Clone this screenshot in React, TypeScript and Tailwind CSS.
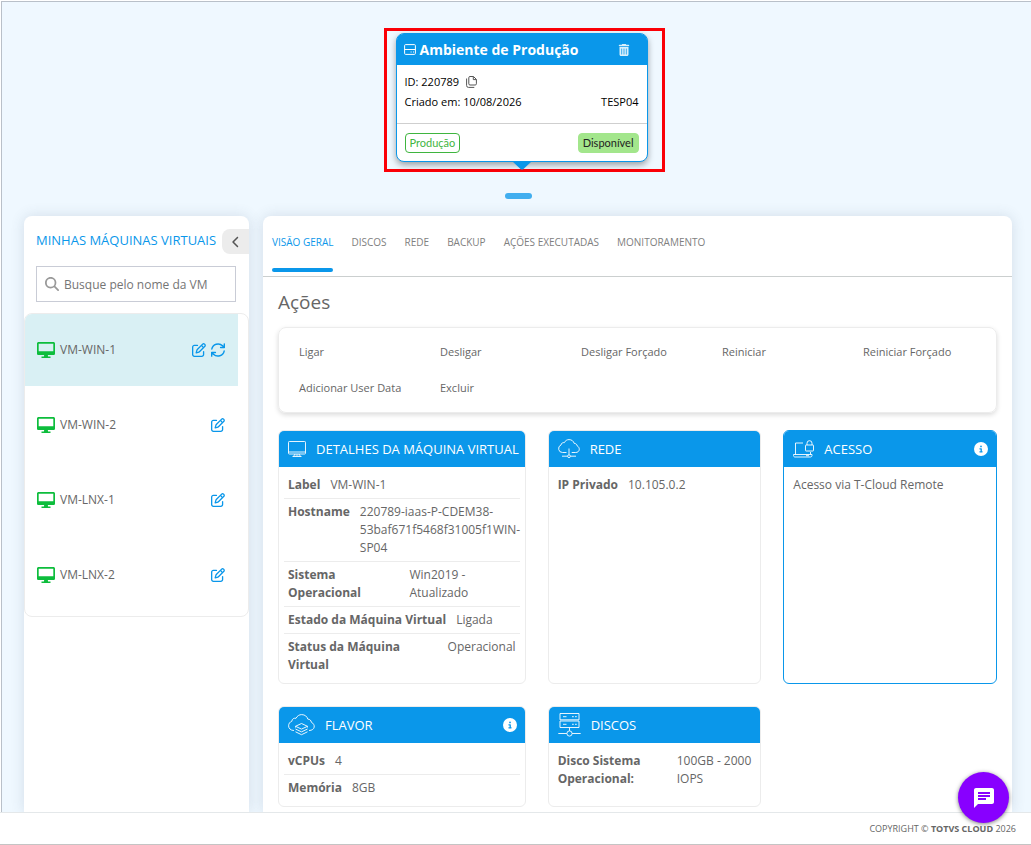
import { useState } from 'react';
import type { ReactNode } from 'react';
import { FaChevronLeft, FaTrashCan, FaRegPenToSquare, FaMagnifyingGlass, FaCircleInfo } from 'react-icons/fa6';
import { MdChat } from 'react-icons/md';

const tabs = ['VISÃO GERAL', 'DISCOS', 'REDE', 'BACKUP', 'AÇÕES EXECUTADAS', 'MONITORAMENTO'];

const machines = ['VM-WIN-1', 'VM-WIN-2', 'VM-LNX-1', 'VM-LNX-2'];

const actions = [
  'Ligar',
  'Desligar',
  'Desligar Forçado',
  'Reiniciar',
  'Reiniciar Forçado',
  'Adicionar User Data',
  'Excluir',
];

type Detail = { label: string; value: ReactNode };

const vmDetails: Detail[] = [
  { label: 'Label', value: 'VM-WIN-1' },
  { label: 'Hostname', value: '220789-iaas-P-CDEM38-53baf671f5468f31005f1WIN-SP04' },
  { label: 'Sistema Operacional', value: 'Win2019 - Atualizado' },
  { label: 'Estado da Máquina Virtual', value: 'Ligada' },
  { label: 'Status da Máquina Virtual', value: 'Operacional' },
];

const flavorDetails: Detail[] = [
  { label: 'vCPUs', value: '4' },
  { label: 'Memória', value: '8GB' },
];

const diskDetails: Detail[] = [
  {
    label: 'Disco Sistema Operacional:',
    value: (
      <>
        <span className="whitespace-nowrap">100GB - 2000</span> IOPS
      </>
    ),
  },
];

/* ── Icons ── */

function DriveIcon() {
  return (
    <svg viewBox="0 0 12 12" className="h-3 w-3" fill="none" stroke="currentColor" aria-hidden="true">
      <rect x="0.6" y="0.6" width="10.8" height="9.8" rx="1" />
      <path d="M0.6 5.5h10.8M6.6 8h1M9 8h1" />
    </svg>
  );
}

function CopyIcon() {
  return (
    <svg viewBox="0 0 11 12" className="h-3 w-[11px] text-[#555]" fill="none" stroke="currentColor" aria-hidden="true">
      <path d="M7.500 .5H4A1.200 1.200 0 0 0 2.800 1.700v6.100A1.200 1.200 0 0 0 4 9h5.200a1.200 1.200 0 0 0 1.200-1.200V3.400zM7.300.7v2.900h3" />
      <path d="M.6 2.500v7A1.900 1.900 0 0 0 2.500 11.400H8.300" />
    </svg>
  );
}

function RefreshIcon() {
  return (
    <svg
      viewBox="2 2 20 20"
      className="h-3.5 w-3.5"
      fill="none"
      stroke="currentColor"
      strokeWidth="2"
      strokeLinecap="round"
      strokeLinejoin="round"
      aria-hidden="true"
    >
      <path d="M3.200 10.500A9 8.500 0 0 1 18.500 6L21 8.500M21 3.200v5.300h-5.300" />
      <path d="M20.800 13.500A9 8.500 0 0 1 5.500 18L3 15.500M3 20.800v-5.300h5.300" />
    </svg>
  );
}

function MonitorIcon() {
  return (
    <svg viewBox="0 0 18 16" className="h-4 w-[18px] shrink-0" aria-hidden="true">
      <path
        fill="#0dbd3c"
        fillRule="evenodd"
        d="M1.6 0h14.8C17.300 0 18 .7 18 1.600v9.800c0 .9-.7 1.600-1.600 1.600H10.800l.3 1.400H13.500V16h-9v-1.600h2.400L7.200 13H1.600C.7 13 0 12.300 0 11.400V1.600C0 .7.7 0 1.600 0zM1.700 1.700v7.500h14.600V1.700z"
      />
    </svg>
  );
}

function ScreenIcon() {
  return (
    <svg
      viewBox="0 0 18 16"
      className="h-4 w-[18px] shrink-0"
      fill="none"
      stroke="currentColor"
      strokeWidth="0.9"
      aria-hidden="true"
    >
      <rect x="0.5" y="0.5" width="17" height="12.500" rx="0.8" />
      <path d="M0.5 11h17M7 13l-1.500 2.500M11 13l1.500 2.500M4.500 15.500h9M7.500 14h3" />
    </svg>
  );
}

function CloudNetworkIcon() {
  return (
    <svg viewBox="0 0 22 19" className="h-[19px] w-[22px]" fill="none" stroke="currentColor" strokeWidth="0.9" aria-hidden="true">
      <path d="M8.500 13.500H4.500A3.900 3.900 0 0 1 3 6c.2-1.800 1.800-2.700 3.300-2.300C7.300 1.600 9 .6 11 .6c2.700 0 4.600 1.600 5.200 3.800 1.600 0 2.800 1 3 2.500 3.300 1.700 2.600 6.600-1.500 6.600h-4" />
      <path d="M11 9.500v6.200M4 17.200h5.500M12.500 17.200H18" />
      <circle cx="11" cy="17.200" r="1.400" />
    </svg>
  );
}

function LaptopLockIcon() {
  return (
    <svg viewBox="0 0 21 18" className="h-[18px] w-[21px]" fill="none" stroke="currentColor" strokeWidth="0.9" aria-hidden="true">
      <path d="M10 3H2.500v11.500M17.500 12v2.500M.5 14.500h18.500v1c0 .8-.5 1.500-1.500 1.500H2C1 17 .5 16.300.5 15.500z" />
      <rect x="12.500" y="5" width="8" height="6" rx="0.5" />
      <path d="M14 5V3.200a2.500 2.500 0 0 1 5 0V5M13 15.700h3" />
    </svg>
  );
}

function CloudLayersIcon() {
  return (
    <svg viewBox="0 0 27 22" className="h-[22px] w-[27px]" fill="none" stroke="currentColor" strokeWidth="0.9" aria-hidden="true">
      <path d="M6 16.500C2.500 16.500.6 14.300.6 11.800c0-2.200 1.300-3.900 3.200-4.500C4 4.900 6 3.800 8 4.300 9.200 1.900 11.200.6 13.700.6c3.200 0 5.400 1.900 6.100 4.500 2 .1 3.300 1.300 3.600 3.200 4.300 2 3.900 8.200-2.400 8.200" />
      <path d="M13.500 9.500 19.500 12.300l-6 2.800-6-2.800zM7.500 15l6 2.900 6-2.900M7.500 17.800l6 2.900 6-2.900M7.500 12.300v1.200M19.500 12.300v1.200" />
    </svg>
  );
}

function DiskStackIcon() {
  return (
    <svg viewBox="0 0 23 24" className="h-6 w-[23px]" fill="none" stroke="currentColor" strokeWidth="0.9" aria-hidden="true">
      <path d="M2 .5h19v6.300H2zM2 8h19v6.500H2zM11.500 14.500v3.300M.3 20.500h8.600M14.100 20.500h8.600" />
      <path d="M5 3.700h3.500M14 3.700h1.800M17 3.700h1.800M5 11.300h3.500M14 11.300h1.800M17 11.300h1.800" />
      <circle cx="11.500" cy="20.500" r="2.600" />
    </svg>
  );
}

/* ── Building blocks ── */

type InfoCardProps = {
  title: string;
  icon: ReactNode;
  info?: boolean;
  highlighted?: boolean;
  children: ReactNode;
};

function InfoCard({ title, icon, info, highlighted, children }: InfoCardProps) {
  return (
    <section
      className={`overflow-hidden rounded-md border bg-white ${highlighted ? 'border-[#0a97ea]' : 'border-[#ececec]'}`}
    >
      <header className="flex h-9 items-center gap-2.5 bg-[#0a97ea] pb-px pl-[9px] pr-2 text-white">
        {icon}
        <h3 className="min-w-0 flex-1 whitespace-nowrap text-[13px]">{title}</h3>
        {info && (
          <button type="button" aria-label={`Informações sobre ${title}`}>
            <FaCircleInfo className="h-3.5 w-3.5" />
          </button>
        )}
      </header>
      <div className="p-[5px]">{children}</div>
    </section>
  );
}

function DetailList({ rows }: { rows: Detail[] }) {
  return (
    <dl className="divide-y divide-[#ececec]">
      {rows.map((row) => (
        <div key={row.label} className="flex gap-2.5 p-1">
          <dt className="font-bold">{row.label}</dt>
          <dd>{row.value}</dd>
        </div>
      ))}
    </dl>
  );
}

function EnvironmentCard() {
  return (
    <div className="ml-3 border-[3px] border-[#fb0007] pb-[7px] pl-[9px] pr-3.5 pt-0.5">
      <article className="relative w-[252px] rounded-lg border border-[#0a97ea] bg-white text-[11px] text-black shadow-[0_3px_6px_rgba(0,0,0,0.35)]">
        <header className="flex h-[31px] items-center gap-1 rounded-t-md bg-[#0a97ea] pl-[7px] pr-[17px] text-white">
          <DriveIcon />
          <h1 className="flex-1 text-[14px] font-bold">Ambiente de Produção</h1>
          <button type="button" aria-label="Excluir ambiente">
            <FaTrashCan className="h-3 w-3 opacity-85" />
          </button>
        </header>
        <div className="px-2 pb-[11px] pt-[7px] leading-5">
          <div className="flex items-center gap-[7px]">
            <span>ID: 220789</span>
            <button type="button" aria-label="Copiar ID">
              <CopyIcon />
            </button>
          </div>
          <div className="flex justify-between">
            <span>Criado em: 10/08/2026</span>
            <span>TESP04</span>
          </div>
        </div>
        <footer className="flex justify-between border-t border-[#cfcfcf] px-2 pb-2 pt-[9px] font-[Lato,sans-serif] leading-[18px]">
          <span className="rounded border border-[#3fb53f] px-1 text-[#3fb53f]">Produção</span>
          <span className="rounded border border-[#a3e68c] bg-[#a3e68c] px-1 text-[#222]">Disponível</span>
        </footer>
        <svg
          viewBox="0 0 20 9"
          className="absolute left-1/2 top-full h-[9px] w-5 -translate-x-1/2"
          fill="#0a97ea"
          aria-hidden="true"
        >
          <path d="M0 0h20l-9 8.500h-2z" />
        </svg>
      </article>
    </div>
  );
}

function Sidebar() {
  const [query, setQuery] = useState('');
  const [selected, setSelected] = useState('VM-WIN-1');
  const visible = machines.filter((name) => name.toLowerCase().includes(query.toLowerCase()));

  return (
    <aside className="w-[225px] shrink-0 rounded-t-lg bg-white pt-[13px] shadow-[0_0_14px_rgba(60,80,110,0.16)]">
      <div className="flex items-center justify-between pl-3">
        <h2 className="whitespace-nowrap pb-1 text-[13px] text-[#0a97ea]">MINHAS MÁQUINAS VIRTUAIS</h2>
        <button
          type="button"
          aria-label="Recolher lista"
          className="flex h-[25px] w-[27px] items-center justify-center rounded-l-lg bg-[#ececec] text-[#555]"
        >
          <FaChevronLeft className="h-3 w-3" />
        </button>
      </div>

      <label className="ml-3 mr-[13px] mt-3 flex h-9 items-center gap-[5px] border border-[#c9ccd6] px-2">
        <FaMagnifyingGlass className="h-3.5 w-3.5 shrink-0 text-[#999]" />
        <input
          type="text"
          aria-label="Busque pelo nome da VM"
          placeholder="Busque pelo nome da VM"
          value={query}
          onChange={(e) => setQuery(e.target.value)}
          className="w-full min-w-0 pt-0.5 text-[12px] placeholder-[#757575] outline-none"
        />
      </label>

      <ul className="mt-[11px] flex flex-col gap-[3px] overflow-hidden rounded-lg border border-[#ececec] pb-[5px] pr-2.5">
        {visible.map((name) => (
          <li
            key={name}
            className={`flex h-[72px] items-center gap-[5px] pl-3 pr-[13px] ${name === selected ? 'bg-[#d9f0f4]' : ''}`}
          >
            <MonitorIcon />
            <button type="button" onClick={() => setSelected(name)} className="flex-1 text-left">
              {name}
            </button>
            <button type="button" aria-label={`Editar ${name}`} className="text-[#0a97ea]">
              <FaRegPenToSquare className="h-3.5 w-3.5" />
            </button>
            {name === selected && (
              <button type="button" aria-label={`Atualizar ${name}`} className="text-[#0a97ea]">
                <RefreshIcon />
              </button>
            )}
          </li>
        ))}
      </ul>
    </aside>
  );
}

function VmPanel() {
  const [activeTab, setActiveTab] = useState(tabs[0]);

  return (
    <main className="min-w-0 flex-1 rounded-t-lg bg-white shadow-[0_0_14px_rgba(60,80,110,0.16)]">
      <nav className="flex gap-[18px] border-b border-[#cbcfcf] px-[9px] pb-1">
        {tabs.map((tab) => (
          <button
            key={tab}
            type="button"
            onClick={() => setActiveTab(tab)}
            className={`flex flex-col whitespace-nowrap text-[10px] ${
              tab === activeTab ? 'text-[#0a97ea]' : 'text-[#808080]'
            }`}
          >
            <span className="flex h-[52px] items-center">{tab}</span>
            <span className={`h-1 w-full rounded-sm ${tab === activeTab ? 'bg-[#0a97ea]' : ''}`} />
          </button>
        ))}
      </nav>

      <div className="px-[15px] pb-[5px] pt-[11px]">
        <h2 className="text-[19px] leading-7">Ações</h2>
        <div className="mt-[11px] grid grid-cols-5 rounded-lg border border-[#ececec] px-1.5 py-1.5 text-[11px] shadow-[0_2px_5px_rgba(0,0,0,0.14)]">
          {actions.map((action) => (
            <button key={action} type="button" className="h-9 whitespace-nowrap pl-3.5 text-left">
              {action}
            </button>
          ))}
        </div>

        <div className="mt-[17px] grid grid-cols-[248fr_214fr_214fr] gap-[22px]">
          <InfoCard title="DETALHES DA MÁQUINA VIRTUAL" icon={<ScreenIcon />}>
            <DetailList rows={vmDetails} />
          </InfoCard>
          <InfoCard title="REDE" icon={<CloudNetworkIcon />}>
            <DetailList rows={[{ label: 'IP Privado', value: '10.105.0.2' }]} />
          </InfoCard>
          <InfoCard title="ACESSO" icon={<LaptopLockIcon />} info highlighted>
            <p className="p-1">Acesso via T-Cloud Remote</p>
          </InfoCard>
          <InfoCard title="FLAVOR" icon={<CloudLayersIcon />} info>
            <DetailList rows={flavorDetails} />
          </InfoCard>
          <InfoCard title="DISCOS" icon={<DiskStackIcon />}>
            <DetailList rows={diskDetails} />
          </InfoCard>
        </div>
      </div>
    </main>
  );
}

export default function App() {
  return (
    <div className="flex h-screen flex-col bg-white font-['Open_Sans',sans-serif] text-[12px] leading-[18px] text-[#666]">
      <div className="ml-px mt-px flex min-h-0 flex-1 flex-col overflow-hidden border-l border-t border-[#b9c0c9] bg-[#eff8ff] pl-[22px] pr-[19px] pt-[26px]">
        <div className="flex flex-col items-center">
          <EnvironmentCard />
          <button type="button" aria-label="Recolher ambientes" className="mt-[21px] h-1.5 w-[27px] rounded-full bg-[#41aeef]" />
        </div>
        <div className="mt-[17px] flex min-h-0 flex-1 gap-3.5">
          <Sidebar />
          <VmPanel />
        </div>
      </div>

      <footer className="relative z-10 flex h-[33px] shrink-0 items-center justify-end border-b border-t border-b-[#c4c4c4] border-t-[#e4e8ea] bg-white pr-[15px] text-[9px]">
        <p>
          COPYRIGHT © <strong>TOTVS CLOUD</strong> 2026
        </p>
      </footer>

      <button
        type="button"
        aria-label="Abrir chat"
        className="fixed bottom-[22px] right-[22px] z-20 flex h-[51px] w-[51px] items-center justify-center rounded-full bg-[#8800ff] text-white shadow-[0_1px_4px_rgba(0,0,0,0.5)]"
      >
        <MdChat className="h-6 w-6" />
      </button>
    </div>
  );
}
